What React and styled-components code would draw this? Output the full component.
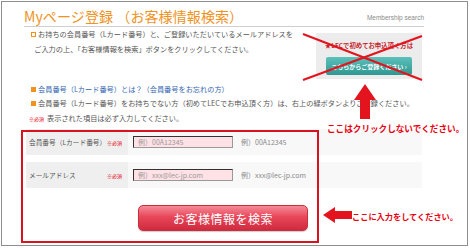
import React from "react";
import styled, { createGlobalStyle } from "styled-components";

const GlobalStyle = createGlobalStyle`
  html, body { margin: 0; padding: 0; background: #ffffff; }
  body { font-family: "Noto Sans CJK JP", "Noto Sans", sans-serif; color: #555; }
  * { box-sizing: border-box; }
`;

const Frame = styled.div`
  position: relative;
  width: 467px;
  height: 245px;
  margin: 1px;
  border: 1px solid #8e8e8e;
  background: #fff;
  overflow: hidden;
`;

const Header = styled.div`
  display: flex;
  align-items: flex-end;
  justify-content: space-between;
  margin: 0 43px 0 22px;
  padding-top: 5px;
  border-bottom: 1px solid #cfcfcf;
`;

const Title = styled.h1`
  margin: 0;
  font-size: 14px;
  line-height: 19px;
  font-weight: 400;
  color: #f0921e;
  letter-spacing: 0.1px;
`;

const SubTitle = styled.span`
  font-family: "Liberation Sans", Arial, sans-serif;
  font-size: 6.5px;
  line-height: 12px;
  color: #8a8a8a;
  padding-bottom: 2px;
`;

const Intro = styled.div`
  display: flex;
  margin: 0 45px 0 22px;
  height: 55px;
`;

const IntroText = styled.p`
  margin: 0;
  padding: 0 0 0 7px;
  font-size: 7.2px;
  line-height: 15px;
  color: #555;
  width: 280px;
`;

const Bullet = styled.span`
  display: inline-block;
  width: 5px;
  height: 5px;
  margin-right: 2px;
  vertical-align: 0px;
  border: ${(p) => (p.$filled ? "none" : "1.5px solid #f0921e")};
  background: ${(p) => (p.$filled ? "#f0921e" : "transparent")};
`;

const SignupBox = styled.div`
  margin: 6px 0 0 auto;
  width: 106px;
  height: 46px;
  background: #ececec;
  display: flex;
  flex-direction: column;
  align-items: center;
  padding-top: 8px;
`;

const SignupLead = styled.span`
  font-size: 6.4px;
  font-weight: 700;
  color: #c8232c;
  line-height: 10px;
`;

const SignupButton = styled.span`
  margin-top: 6px;
  width: 86px;
  height: 18px;
  border-radius: 2px;
  background: linear-gradient(#5cc0bb, #2f9891);
  color: #fff;
  font-size: 6px;
  font-weight: 700;
  display: flex;
  align-items: center;
  justify-content: center;
`;

const Notes = styled.div`
  margin: 0 0 0 29px;
  display: flex;
  flex-direction: column;
`;

const Note = styled.p`
  margin: 0;
  font-size: 7.2px;
  line-height: 14px;
  color: ${(p) => (p.$link ? "#3466b0" : "#555")};
  white-space: nowrap;
`;

const RequiredNote = styled.p`
  margin: 1px 0 0 -2px;
  font-size: 7.2px;
  line-height: 14px;
  color: #555;
`;

const Req = styled.span`
  font-size: 5px;
  color: #e60012;
  margin-right: 3px;
  white-space: nowrap;
`;

const Form = styled.div`
  margin: 3px 45px 0 24px;
  display: flex;
  flex-direction: column;
  gap: 7px;
`;

const Row = styled.div`
  display: grid;
  grid-template-columns: 102px 1fr;
  height: 26px;
`;

const Label = styled.div`
  background: #efefef;
  display: flex;
  align-items: center;
  justify-content: space-between;
  padding: 0 3px 0 3px;
  font-size: 6.7px;
  color: #555;
  white-space: nowrap;
`;

const Value = styled.div`
  background: #f8f8f8;
  display: flex;
  align-items: center;
  padding-left: 5px;
  gap: 8px;
`;

const Input = styled.input`
  width: 100px;
  height: 12px;
  padding: 0 0 0 4px;
  font-family: inherit;
  font-size: 7px;
  background: #ffe1e6;
  border: 1px solid #999;
  border-top: 1.5px solid #333;
  border-left: 1.5px solid #333;
  outline: none;
  &::placeholder { color: #999; }
`;

const Example = styled.span`
  font-size: 7px;
  color: #888;
`;

const ButtonRow = styled.div`
  display: flex;
  justify-content: flex-start;
  padding-left: 112px;
  margin-top: 10px;
`;

const SearchButton = styled.button`
  width: 170px;
  height: 26px;
  border-radius: 5px;
  border: 1px solid #c8303e;
  background: linear-gradient(#f58a96 0%, #e8475a 45%, #d02a3e 100%);
  color: #fff;
  font-family: inherit;
  font-size: 12px;
  letter-spacing: 0.5px;
  box-shadow: 0 1px 1px rgba(0,0,0,0.2);
`;

const Overlay = styled.svg`
  position: absolute;
  left: ${(p) => p.$x}px;
  top: ${(p) => p.$y}px;
  overflow: visible;
`;

const RedBox = styled.div`
  position: absolute;
  left: 19px;
  top: 128px;
  width: 298px;
  height: 113px;
  border: 2px solid #d7141e;
`;

const Annotation = styled.span`
  position: absolute;
  left: ${(p) => p.$x}px;
  top: ${(p) => p.$y}px;
  font-size: ${(p) => p.$size}px;
  font-weight: 700;
  color: #e60012;
  white-space: nowrap;
  line-height: 12px;
`;

export default function App() {
  return (
    <>
      <GlobalStyle />
      <Frame>
        <Header>
          <Title>Myページ登録 （お客様情報検索）</Title>
          <SubTitle>Membership search</SubTitle>
        </Header>
        <Intro>
          <IntroText>
            <Bullet />
            お持ちの会員番号（Lカード番号）と、ご登録いただいているメールアドレスを
            <br />
            &nbsp;&nbsp;ご入力の上、「お客様情報を検索」ボタンをクリックしてください。
          </IntroText>
          <SignupBox>
            <SignupLead>★LECで初めてお申込頂く方は</SignupLead>
            <SignupButton>こちらからご登録ください ›</SignupButton>
          </SignupBox>
        </Intro>
        <Notes>
          <Note $link>
            <Bullet $filled />
            会員番号（Lカード番号）とは？（会員番号をお忘れの方）
          </Note>
          <Note>
            <Bullet $filled />
            会員番号（Lカード番号）をお持ちでない方（初めてLECでお申込頂く方）は、右上の緑ボタンよりご登録ください。
          </Note>
          <RequiredNote>
            <Req>※必須</Req>表示された項目は必ず入力してください。
          </RequiredNote>
        </Notes>
        <Form>
          <Row>
            <Label>
              会員番号（Lカード番号）<Req>※必須</Req>
            </Label>
            <Value>
              <Input placeholder="例）00A12345" />
              <Example>例）00A12345</Example>
            </Value>
          </Row>
          <Row>
            <Label>
              メールアドレス<Req>※必須</Req>
            </Label>
            <Value>
              <Input placeholder="例）xxx@lec-jp.com" />
              <Example>例）xxx@lec-jp.com</Example>
            </Value>
          </Row>
          <ButtonRow>
            <SearchButton>お客様情報を検索</SearchButton>
          </ButtonRow>
        </Form>

        <Overlay $x={301} $y={31} width="120" height="48" viewBox="0 0 120 48">
          <line x1="0" y1="1" x2="119" y2="47" stroke="#e3141e" strokeWidth="2.2" />
          <line x1="0" y1="47" x2="119" y2="3" stroke="#e3141e" strokeWidth="2.2" />
        </Overlay>
        <Overlay $x={352} $y={82} width="22" height="35" viewBox="0 0 22 35">
          <polygon points="11,0 22,16 16,16 16,35 6,35 6,16 0,16" fill="#e3141e" />
        </Overlay>
        <Annotation $x={325} $y={120} $size={8.6}>ここはクリックしないでください。</Annotation>
        <RedBox />
        <Overlay $x={321} $y={205} width="29" height="16" viewBox="0 0 29 16">
          <polygon points="0,8 12,0 12,4 29,4 29,12 12,12 12,16" fill="#e3141e" />
        </Overlay>
        <Annotation $x={350} $y={208} $size={8.2}>ここに入力をしてください。</Annotation>
      </Frame>
    </>
  );
}
